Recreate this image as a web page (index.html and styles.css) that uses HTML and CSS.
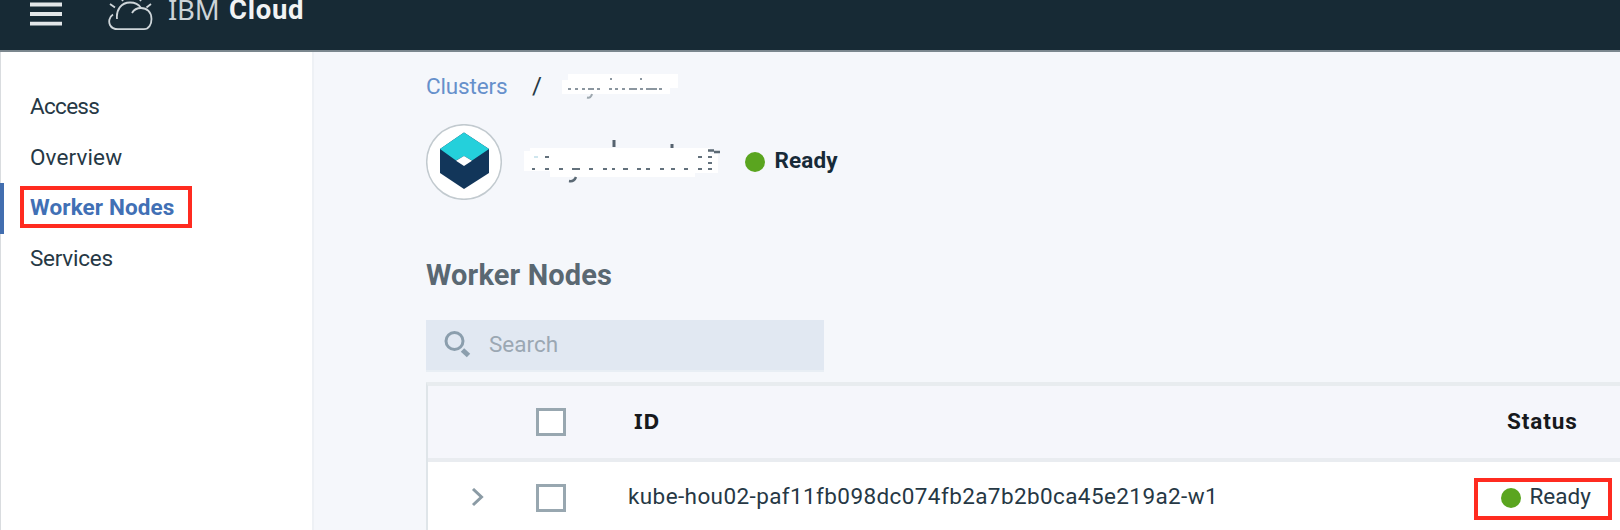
FILE: index.html
```
<!DOCTYPE html>
<html lang="en">
<head>
<meta charset="utf-8">
<title>IBM Cloud - Worker Nodes</title>
<link rel="stylesheet" href="styles.css">
</head>
<body>
<header class="topbar">
  <svg class="menu" width="32" height="30" viewBox="0 0 32 30"><path d="M0 6.500h32M0 16h32M0 25.700h32" stroke="#e3e7e9" stroke-width="3.800"/></svg>
  <svg class="cloud" width="46" height="34" viewBox="0 0 46 34" fill="none" stroke="#ced5d9" stroke-width="1.800">
    <path d="M5 16.500C1 19 .5 24 2 27c1.500 3 4 4.200 8 4.200h26c5 0 7.500-5 7.500-10.200 0-7-4.500-11-10.500-11-4 0-7 1.500-9 5"/>
    <path d="M9 21C8 12 13 4.500 22 4.500c5 0 8.500 1.500 11 5.500M2 6l5 3.500M13 0l2 3M32 3l2-3M38.500 9.500L43 6"/>
  </svg>
  <div class="brand"><span class="ibm">IBM</span><b class="cloudword">Cloud</b></div>
</header>
<div class="page">
  <nav class="side">
    <a class="item"><span class="t-access">Access</span></a>
    <a class="item"><span class="t-overview">Overview</span></a>
    <a class="item active"><span class="t-worker">Worker Nodes</span></a>
    <a class="item"><span class="t-services">Services</span></a>
  </nav>
  <main class="main">
    <div class="crumbs">
      <a class="link">Clusters</a><span class="slash">/</span>
      <svg class="crumb-mask" width="120" height="28" viewBox="0 0 120 28">
        <path d="M6 0h110v14h-8v6H0V6h6z" fill="#fff"/>
        <path d="M6 15h3M13 15h3M20 15h3M26 15h6M35 15h3M47 15h3M53 15h3M60 15h3M67 15h8M78 15h3M84 15h11M97 15h3M48 5h2M78 5h2" stroke="#8b969f" stroke-width="1.800"/>
        <path d="M25 23.500q4 1 5-3.500" stroke="#9da7ae" stroke-width="2" fill="none"/>
      </svg>
    </div>
    <div class="cluster">
      <svg class="logo" width="76" height="76" viewBox="0 0 76 76">
        <circle cx="38" cy="38" r="37.300" fill="#fff" stroke="#c2cacf" stroke-width="1.500"/>
        <path d="M38 8.500L63 25v24L38 65 14 49V25z" fill="#12365a"/>
        <path d="M38 8.500L63 25 46 36.500 38 32 30 36.500 14 25z" fill="#24d0db"/>
        <path d="M38 32l8 4.800-8 5.200-8-5.200z" fill="#fff"/>
      </svg>
      <svg class="name-mask" width="200" height="46" viewBox="0 0 200 46">
        <path d="M6 8h180v6h8v19h-23v4H26v-6H0V11h6z" fill="#fff"/>
        <path d="M90 0v7M148 4v4" stroke="#56636f" stroke-width="3"/>
        <path d="M10 17h4" stroke="#cfe6ee" stroke-width="2"/>
        <path d="M21 17h4M174 17h4M184 17h4M8 29h3M21 29h4M35 29h4M48 29h8M65 29h4M79 29h4M88 29h3M99 29h5M113 29h4M122 29h4M136 29h4M147 29h4M160 29h4M174 29h4M184 29h4M184 23h4" stroke="#63717c" stroke-width="2"/>
        <path d="M184 10.500h6M190 12h6M45 41q5 1 7-4" stroke="#5b6974" stroke-width="2.500" fill="none"/>
      </svg>
      <i class="dot"></i><b class="ready-strong">Ready</b>
    </div>
    <h1 class="title"><span class="t-title">Worker Nodes</span></h1>
    <div class="search">
      <svg width="28" height="28" viewBox="0 0 28 28" fill="none" stroke="#8b9ead"><circle cx="10.500" cy="11" r="8.500" stroke-width="3"/><path d="M18.500 20l6 5.500" stroke-width="5"/></svg>
      <span class="t-search">Search</span>
    </div>
    <section class="table">
      <div class="row head">
        <span></span><i class="box"></i><b class="id">ID</b><b class="status-head">Status</b>
      </div>
      <div class="row">
        <svg class="chevron" width="14" height="20" viewBox="0 0 14 20"><path d="M2 1l8.500 8L2 17" fill="none" stroke="#8b9ba5" stroke-width="3"/></svg>
        <i class="box"></i><span class="node">kube-hou02-paf11fb098dc074fb2a7b2b0ca45e219a2-w1</span>
        <span class="status"><i class="dot"></i><span class="ready">Ready</span></span>
      </div>
    </section>
  </main>
</div>
<div class="mark mark-nav"></div>
<div class="mark mark-status"></div>
</body>
</html>
```
FILE: styles.css
```
* { box-sizing: border-box; }
body { margin: 0; width: 1620px; height: 530px; overflow: hidden; position: relative; background: #f5f7fb; color: #263845; font: 22.5px/30px Roboto, "Liberation Sans", sans-serif; }
svg { display: block; flex: none; }
span, b, a { white-space: nowrap; }
.topbar { height: 52px; background: #172a35; border-bottom: 2px solid #7b878e; display: flex; align-items: flex-start; padding-left: 30px; }
.menu { margin-top: -2px; }
.cloud { margin: -2px 0 0 46px; }
.brand { display: flex; color: #fff; font-size: 27.500px; line-height: 20px; padding: 0 0 0 14px; }
.ibm { width: 61px; font-family: "Noto Sans", sans-serif; font-weight: 400; color: #cdd4d8; letter-spacing: -.2px; }
.cloudword { font-weight: 700; color: #f1f3f4; letter-spacing: .7px; }
.page { display: flex; height: 478px; }
.side { width: 314px; background: #fff; border-left: 1px solid #d9dcdf; border-right: 2px solid #eef1f5; padding-top: 30px; }
.item { display: flex; align-items: center; height: 50.600px; padding: 0 0 2px 29px; }
.active { margin-left: -1px; border-left: 4px solid #426eaf; padding-left: 26px; color: #4170b5; font-weight: 700; }
.t-access { letter-spacing: -.7px; }
.t-overview, .t-worker { letter-spacing: .12px; }
.t-services { letter-spacing: -.25px; }
.main { flex: 1; padding: 19px 0 0 112px; min-width: 0; }
.crumbs { display: flex; height: 53px; }
.link { color: #6690cb; width: 106px; letter-spacing: -.15px; }
.slash { width: 30px; font-size: 24px; }
.crumb-mask { margin-top: 3px; }
.cluster { display: flex; align-items: center; height: 76px; }
.name-mask { margin: 2px 0 0 22px; }
.dot { width: 20px; height: 20px; border-radius: 50%; background: #5aa51f; flex: none; }
.cluster .dot { margin: -1px 0 0 20.500px; }
.ready-strong { margin: -4px 0 0 10px; color: #172a38; letter-spacing: .15px; }
.title { margin: 55px 0 0; height: 40px; font-size: 29px; line-height: 40px; color: #5a6872; font-weight: 700; letter-spacing: .15px; }
.search { display: flex; align-items: center; width: 398px; height: 52px; margin-top: 25px; padding: 0 0 2px 18px; background: #e1e8f2; border-bottom: 2px solid #e8eef4; color: #9ba7b3; }
.search span { margin-left: 17px; }
.table { margin-top: 10px; border-top: 4px solid #e8ecef; border-left: 2px solid #dfe5e9; background: #fff; height: 150px; }
.row { display: grid; grid-template-columns: 108px 93px 1fr 145px; align-items: center; height: 72px; }
.head { background: #f5f6fb; height: 76px; border-bottom: 4px solid #e9ecf0; color: #17191c; }
.box { width: 30px; height: 28px; border: 3px solid #98a7b0; background: #fff; }
.id { font-family: "Noto Sans", sans-serif; font-size: 22px; padding: 0 0 4px 5px; letter-spacing: .8px; }
.status-head { padding: 0 0 2px 32px; letter-spacing: .9px; }
.chevron { margin: -1px 0 0 43px; }
.node { padding-bottom: 4px; margin-left: -1px; letter-spacing: .4px; }
.status { display: flex; align-items: center; padding-left: 25.500px; }
.ready { margin-left: 9px; padding-bottom: 4px; }
.mark { position: absolute; border: 4px solid #ff2b20; }
.mark-nav { left: 20px; top: 186px; width: 172px; height: 42px; }
.mark-status { left: 1474px; top: 478px; width: 138px; height: 42px; }
```
